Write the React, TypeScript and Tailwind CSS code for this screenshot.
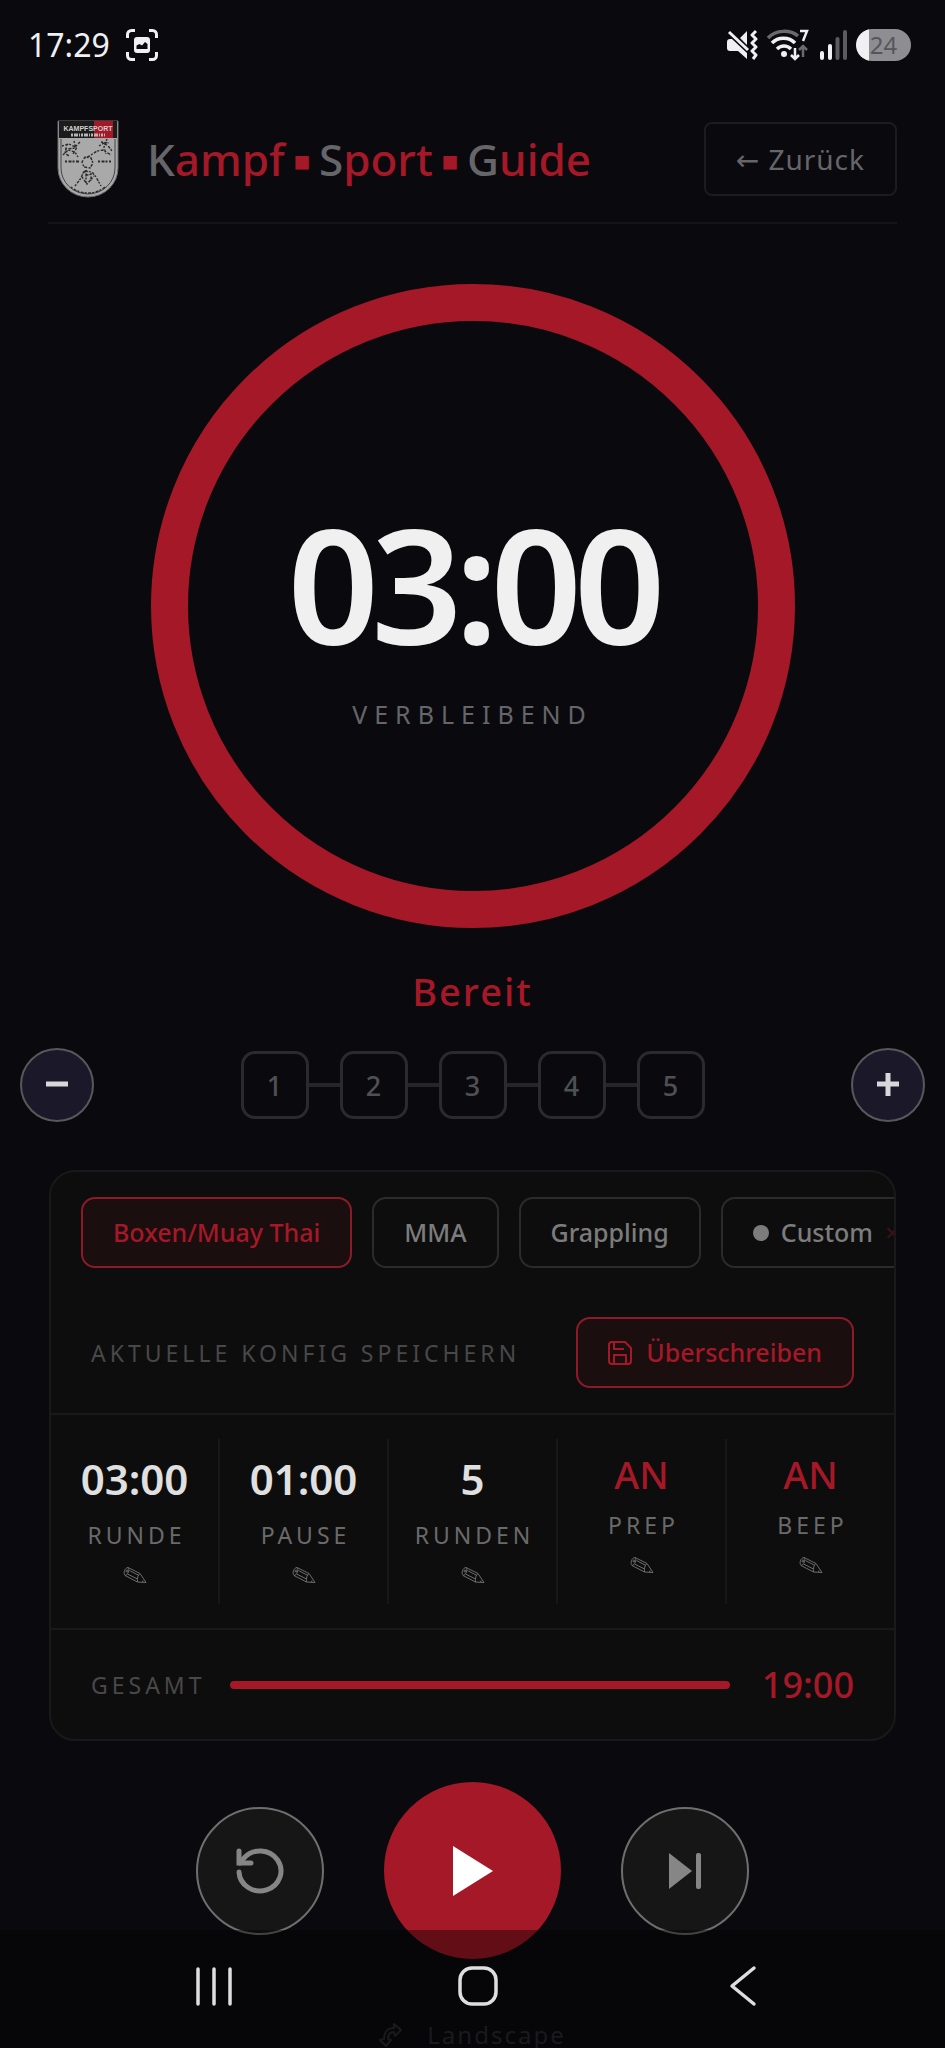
import React, { useState } from 'react';

interface StatProps {
  value: string;
  label: string;
  toggle?: boolean;
}

const stats: StatProps[] = [
  { value: '03:00', label: 'RUNDE' },
  { value: '01:00', label: 'PAUSE' },
  { value: '5', label: 'RUNDEN' },
  { value: 'AN', label: 'PREP', toggle: true },
  { value: 'AN', label: 'BEEP', toggle: true },
];

const presets = ['Boxen/Muay Thai', 'MMA', 'Grappling'];

const StatusBar: React.FC = () => (
  <div className="flex h-[90px] shrink-0 items-center justify-between pl-7 pr-[34px] text-[#f0f0f2]">
    <div className="flex items-center gap-4">
      <span className="text-[32px] leading-none">17:29</span>
      <svg className="h-8 w-8" viewBox="0 0 32 32" fill="none">
        <path d="M1.5 9V5.5a4 4 0 0 1 4-4H9M23 1.500h3.500a4 4 0 0 1 4 4V9M30.500 23v3.500a4 4 0 0 1-4 4H23M9 30.500H5.500a4 4 0 0 1-4-4V23" stroke="currentColor" strokeWidth="3" />
        <rect x="8" y="8" width="16" height="16" rx="3" fill="currentColor" />
        <path d="M10.500 20v-3.500l3-1.500 2.500 1.500 3-3.500 2.500 2V20z" fill="#0a0a0e" />
      </svg>
    </div>
    <div className="flex items-center gap-2">
      <svg className="h-8 w-8" viewBox="0 0 32 32" fill="none">
        <path d="M1 13a3 3 0 0 1 3-3h2l15 14v6l-9-8H4a3 3 0 0 1-3-3zM14 9l7-7v14z" fill="currentColor" />
        <path d="M3 3l19 18" stroke="currentColor" strokeWidth="3" />
        <path d="M30 2l-4 4 4 4-4 4 4 4-4 4 4 4-3 4" stroke="currentColor" strokeWidth="3" strokeLinejoin="round" />
      </svg>
      <svg className="h-8 w-[44px]" viewBox="0 0 44 32" fill="none">
        <path d="M2 9C10 .5 24 .5 32 7" stroke="#6a6a6e" strokeWidth="3.500" />
        <path d="M6 14c6-6.500 17-6.500 23 0M11 20c4-4 10-4 14 0" stroke="currentColor" strokeWidth="3.500" />
        <circle cx="18" cy="25" r="3" fill="currentColor" />
        <path d="M34 2h7l-4 10" stroke="currentColor" strokeWidth="2.500" />
        <path d="M29 19v11M25 26l4 4 4-4" stroke="currentColor" strokeWidth="2.500" />
        <path d="M37 28V17M33 21l4-4 4 4" stroke="#6a6a6e" strokeWidth="2.500" />
      </svg>
      <svg className="h-8 w-[30px]" viewBox="0 0 30 32" fill="none" strokeWidth="4" strokeLinecap="round">
        <path d="M4 24v5M12 17v12" stroke="currentColor" />
        <path d="M19.500 10v19M27 3v26" stroke="#5c5c60" />
      </svg>
      <span className="flex h-8 w-[55px] items-center justify-center rounded-full bg-linear-to-r from-[#f0f0f2] from-24% to-[#8e8e92] to-24% text-2xl leading-none text-[#56565a]">
        24
      </span>
    </div>
  </div>
);

const Logo: React.FC = () => (
  <svg className="h-[78px] w-[62px]" viewBox="0 0 62 78" role="img" aria-label="Kampfsport">
    <path d="M1 1h60v47a30 29 0 0 1-60 0z" fill="#a9a9a9" stroke="#6b6b6b" />
    <path d="M2 1h58v17H2z" fill="#1c1c1a" />
    <path d="M37 1h19v17H37z" fill="#a51827" />
    <path d="M4 19v29a27 26 0 0 0 54 0V19" fill="none" stroke="#444" strokeWidth="1" />
    <text x="31" y="11" textAnchor="middle" fontSize="7" fontWeight="700" fill="#cfcfcf" fontFamily="Liberation Sans, sans-serif">
      KAMPFSPORT
    </text>
    <path d="M14 15h34" stroke="#b5b5b5" strokeWidth="3" strokeDasharray="2 1 4 1 1 1" />
    <g fill="none" stroke="#2c2c2c" strokeWidth="1.400" strokeDasharray="2 1.500 3 1">
      <path d="M5 26l7-2 6 3 5-5M6 35l5-5 7 2 3 5M8 29l12-1M10 24l-2 9 4 3M17 21l2 8-3 5" />
      <path d="M34 35l6-4 6-1 8 5M42 26l5-3 5 4 3 4M50 19l-3 8 2 7M44 22l8 1" />
      <path d="M25 42l3-5 6 1 2 5-3 5-6-1zM27 38l6-2" />
      <path d="M18 66l6-8 3-7 8 1 4 5 5 9M27 51l3 4 6-1M25 57l5 7 7-8M29 50v13M34 53v8" />
      <path d="M8 41.500h14M41 41.500h13" strokeWidth="2" />
      <path d="M14 67c9 8 25 8 34 0" />
    </g>
  </svg>
);

const Dot: React.FC = () => <span className="text-[27px] leading-none">▪</span>;

const Header: React.FC = () => (
  <header className="mx-12 flex items-center justify-between border-b-2 border-[#151519] pt-[30px] pb-6">
    <div className="flex items-center gap-7 pl-[9px]">
      <Logo />
      <h1 className="flex items-center gap-2 text-[44px] leading-[56px] font-medium whitespace-nowrap text-[#a51827]">
        <span>
          <span className="text-[#66666a]">K</span>ampf
        </span>
        <Dot />
        <span>
          <span className="text-[#66666a]">S</span>port
        </span>
        <Dot />
        <span>
          <span className="text-[#66666a]">G</span>uide
        </span>
      </h1>
    </div>
    <button className="h-[74px] rounded-lg border-2 border-[#1c1c1f] px-[30px] text-[28px] leading-none tracking-[1px] whitespace-nowrap text-[#66666a]">
      ← Zurück
    </button>
  </header>
);

const TimerRing: React.FC = () => (
  <div className="mt-[60px] flex aspect-square w-[644px] flex-col items-center justify-center self-center rounded-full border-[37px] border-[#a51827] pt-5">
    <span className="text-[160px] leading-[160px] font-semibold tracking-tighter text-[#f0f0f0]">03:00</span>
    <span className="mt-9 text-[25px] leading-8 tracking-[7px] text-[#66666a]">VERBLEIBEND</span>
  </div>
);

const RoundRow: React.FC<{ rounds: number; setRounds: (n: number) => void }> = ({ rounds, setRounds }) => {
  const stepClass =
    'flex h-[74px] w-[74px] items-center justify-center rounded-full border-2 border-[#58585a] bg-[#1b1929] text-[#d8d8da]';

  return (
    <div className="mx-5 mt-8 flex items-center justify-between">
      <button aria-label="Weniger Runden" className={stepClass} onClick={() => setRounds(Math.max(1, rounds - 1))}>
        <svg className="h-6 w-6" viewBox="0 0 24 24" stroke="currentColor" strokeWidth="5">
          <path d="M1 11h22" />
        </svg>
      </button>
      <div className="flex items-center">
        {Array.from({ length: rounds }, (_, i) => (
          <React.Fragment key={i}>
            {i > 0 && <span className="h-1 w-[31px] bg-[#262628]" />}
            <span className="flex h-[68px] w-[68px] items-center justify-center rounded-[14px] border-3 border-[#2b2b2d] text-[27px] leading-none font-medium text-[#505054]">
              {i + 1}
            </span>
          </React.Fragment>
        ))}
      </div>
      <button aria-label="Mehr Runden" className={stepClass} onClick={() => setRounds(rounds + 1)}>
        <svg className="h-6 w-6" viewBox="0 0 24 24" stroke="currentColor" strokeWidth="5">
          <path d="M1 11h22M12 0v23" />
        </svg>
      </button>
    </div>
  );
};

const Pencil: React.FC = () => (
  <svg className="h-[18px] w-6" viewBox="0 0 24 18" fill="none" stroke="#6c6c6c" strokeWidth="1" strokeLinejoin="round">
    <path d="M5 1.500l12 6 6 9-8.500-.5L2 9.500C0 7 1.500 2 5 1.500z" />
    <path d="M5 1.500C7 3.500 5 9 2 9.500M17 7.500c-2 1-3 5-2.500 8.500M6.500 4.500l9.500 5M4.500 8l10 5M20 14.500l-.5 1.800" />
    <circle cx="4" cy="5" r="1" />
  </svg>
);

const Stat: React.FC<StatProps> = ({ value, label, toggle }) => (
  <button className="flex flex-1 basis-0 flex-col items-center border-r-2 border-[#171717] pt-[11px] last:border-r-0">
    {toggle ? (
      <span className="text-[38px] leading-[48px] font-medium text-[#a51827]">{value}</span>
    ) : (
      <span className="text-[42px] leading-[58px] font-semibold text-[#e0e0e0]">{value}</span>
    )}
    <span className="mt-1 pl-1 text-[23px] leading-[46px] tracking-[4px] text-[#6a6a6a]">{label}</span>
    <span className="mt-2 mb-5">
      <Pencil />
    </span>
  </button>
);

const ConfigPanel: React.FC = () => {
  const [active, setActive] = useState(presets[0]);
  const chip = 'h-[71px] shrink-0 rounded-[14px] border-2 px-[30px] text-[25px] leading-none font-medium whitespace-nowrap';

  return (
    <section className="mx-[49px] mt-12 overflow-hidden rounded-[26px] border-2 border-[#191919] bg-[#0d0d0d]">
      <div className="flex gap-5 overflow-hidden pt-[25px] pl-[30px]">
        {presets.map((name) => (
          <button
            key={name}
            onClick={() => setActive(name)}
            className={
              name === active
                ? `${chip} border-[#8d1a28] bg-[#1b0e0f] text-[#a51827]`
                : `${chip} border-[#2b2b2b] text-[#7c7c7c]`
            }
          >
            {name}
          </button>
        ))}
        <button className={`${chip} flex items-center border-[#2b2b2b] text-[#7c7c7c]`}>
          <span className="mr-3 h-4 w-4 rounded-full bg-[#7c7c7c]" />
          Custom
          <span className="ml-3 text-[#3a1216]">×</span>
        </button>
      </div>
      <div className="flex items-center justify-between pt-[49px] pr-10 pb-[25px] pl-10">
        <span className="text-[23px] leading-8 tracking-[4px] whitespace-nowrap text-[#484848]">AKTUELLE KONFIG SPEICHERN</span>
        <button className={`${chip} flex items-center gap-[14px] border-[#8d1a28] bg-[#1b0e0f] text-[#a51827]`}>
          <svg className="h-6 w-6" viewBox="0 0 24 24" fill="none" stroke="currentColor" strokeWidth="2" strokeLinejoin="round">
            <path d="M4 1h13l6 6v13a3 3 0 0 1-3 3H4a3 3 0 0 1-3-3V4a3 3 0 0 1 3-3z" />
            <path d="M6 1v7h10M6 23v-9h12v9" />
          </svg>
          Überschreiben
        </button>
      </div>
      <div className="flex border-y-2 border-[#191919] py-6">
        {stats.map((s) => (
          <Stat key={s.label} {...s} />
        ))}
      </div>
      <div className="flex h-[109px] items-center px-10">
        <span className="text-[23px] leading-8 tracking-[4px] text-[#484848]">GESAMT</span>
        <span className="mr-8 ml-6 h-2 flex-1 rounded-full bg-[#a51827]" />
        <span className="text-[36px] leading-none font-medium text-[#a51827]">19:00</span>
      </div>
    </section>
  );
};

const Controls: React.FC = () => {
  const sideClass =
    'flex h-32 w-32 items-center justify-center rounded-full border-2 border-[#6e6e6e] bg-[#161616] text-[#868686]';

  return (
    <div className="mt-[41px] flex items-center justify-center gap-[60px]">
      <button aria-label="Zurücksetzen" className={sideClass}>
        <svg className="h-12 w-12" viewBox="0 0 48 48" fill="none" stroke="currentColor" strokeWidth="5" strokeLinecap="round">
          <path d="M3 25a21 20 0 1 0 5-14L4 16" />
          <path d="M3 4v12h12" />
        </svg>
      </button>
      <button aria-label="Start" className="flex h-[177px] w-[177px] items-center justify-center rounded-full bg-[#a51827] text-white">
        <svg className="h-[50px] w-10" viewBox="0 0 40 50" fill="currentColor">
          <path d="M0 0l40 25L0 50z" />
        </svg>
      </button>
      <button aria-label="Nächste Runde" className={sideClass}>
        <svg className="h-9 w-8" viewBox="0 0 32 36" fill="currentColor">
          <path d="M0 0l23 18L0 36z" />
          <rect x="27" width="5" height="36" rx="2" />
        </svg>
      </button>
    </div>
  );
};

const NavBar: React.FC = () => (
  <nav className="fixed inset-x-0 bottom-0 flex h-[118px] items-start bg-black/40 pt-[34px] pr-[70px] pl-[82px] text-[#dedede]">
    <button aria-label="Letzte Apps" className="flex flex-1 justify-center">
      <svg className="h-11 w-11" viewBox="0 0 44 44" stroke="currentColor" strokeWidth="3.500" strokeLinecap="round">
        <path d="M6 5v35M22 5v35M38 5v35" />
      </svg>
    </button>
    <button aria-label="Startseite" className="flex flex-1 justify-center">
      <svg className="h-11 w-11" viewBox="0 0 44 44" fill="none" stroke="currentColor" strokeWidth="3.500">
        <rect x="4" y="4" width="36" height="36" rx="12" />
      </svg>
    </button>
    <button aria-label="Zurück" className="flex flex-1 justify-center">
      <svg className="h-11 w-11" viewBox="0 0 44 44" fill="none" stroke="currentColor" strokeWidth="3.500" strokeLinecap="round" strokeLinejoin="round">
        <path d="M33 4L11 22l22 18" />
      </svg>
    </button>
  </nav>
);

export default function App() {
  const [rounds, setRounds] = useState(5);

  return (
    <div className="flex h-screen flex-col overflow-hidden bg-[#0a0a0e] font-['Noto_Sans','DejaVu_Sans',sans-serif]">
      <StatusBar />
      <Header />
      <main className="flex flex-col">
        <TimerRing />
        <p className="mt-[38px] text-center text-[38px] leading-[50px] font-medium tracking-[2px] text-[#a51827]">Bereit</p>
        <RoundRow rounds={rounds} setRounds={setRounds} />
        <ConfigPanel />
        <Controls />
        <button className="mt-14 flex items-center justify-center gap-6 text-[24px] leading-10 tracking-[2px] text-[#2c2c30]">
          <svg className="h-6 w-6" viewBox="0 0 24 24" fill="none" stroke="currentColor" strokeWidth="2" strokeLinejoin="round">
            <path d="M7 23l-6-6 4-1c0-7 4-11 10-11V1l7 6-6 6-1-4c-4 0-6 3-6 7l3 1z" />
          </svg>
          Landscape
        </button>
      </main>
      <NavBar />
    </div>
  );
}
